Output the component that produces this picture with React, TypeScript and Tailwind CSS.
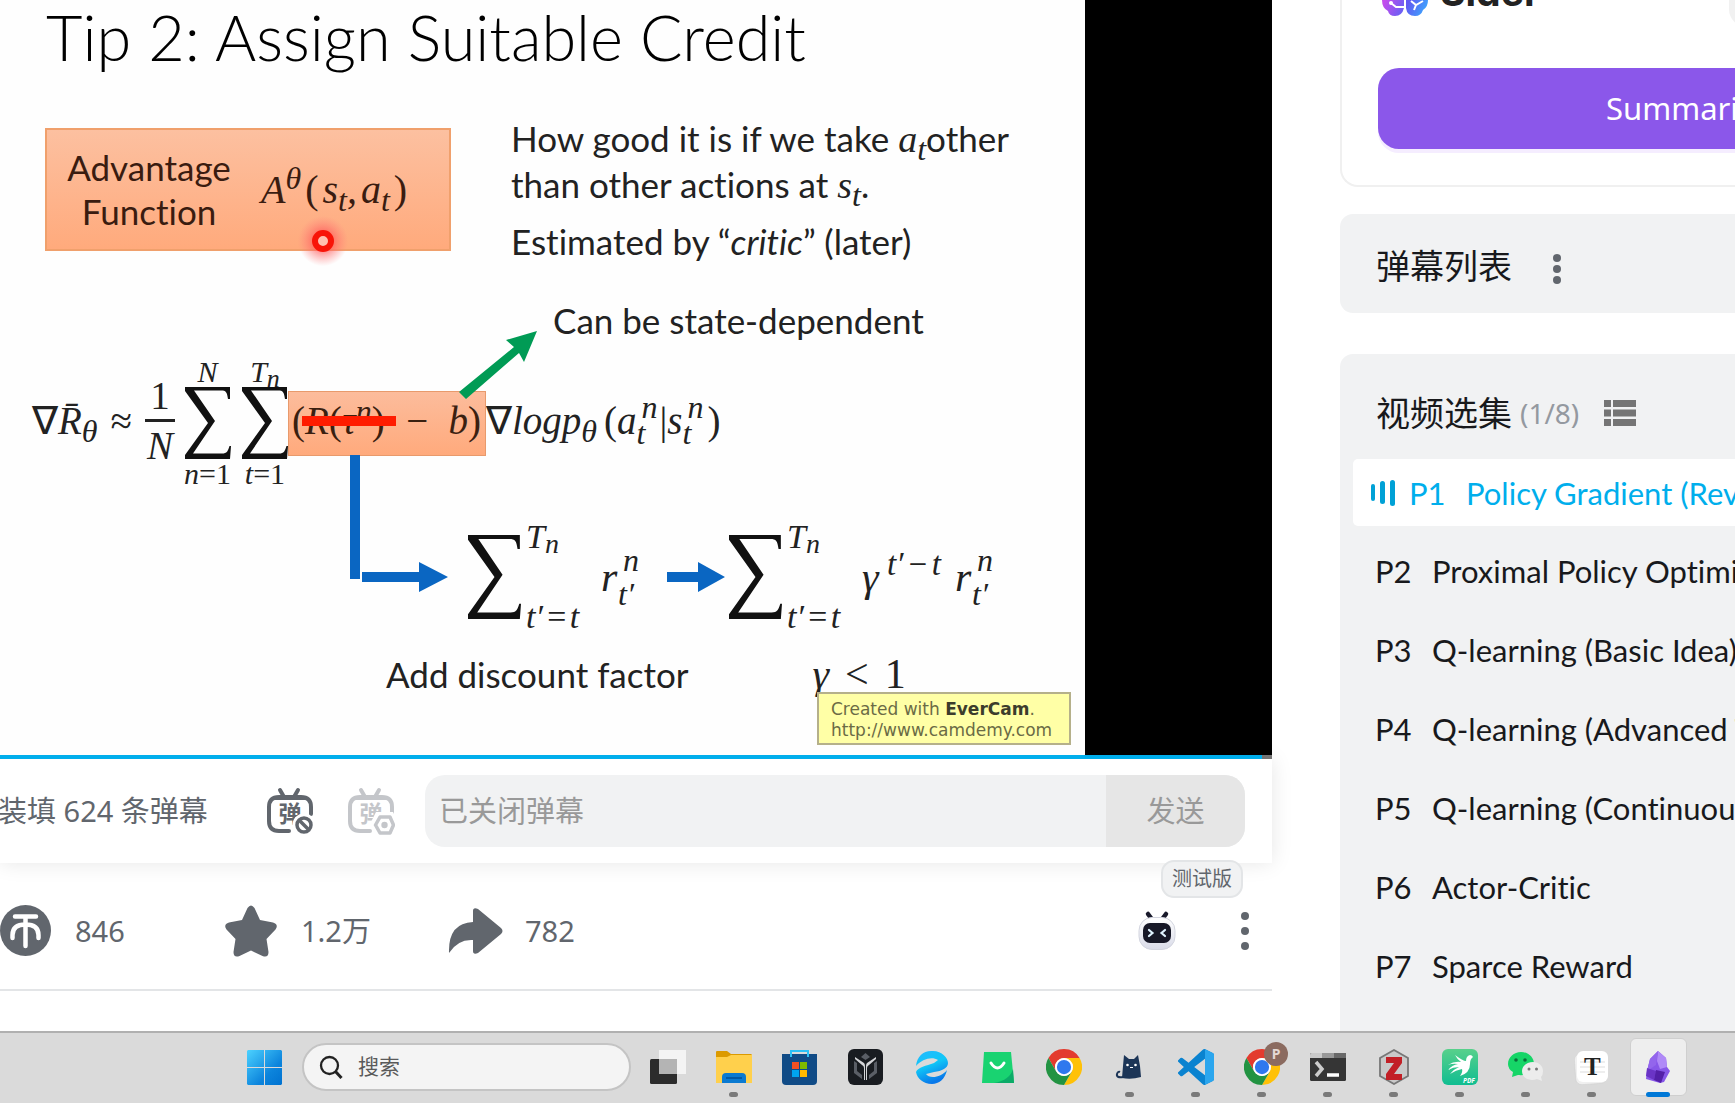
import type { ReactNode } from "react";

const episodes = [
  { id: "P1", title: "Policy Gradient (Review)" },
  { id: "P2", title: "Proximal Policy Optimization (PPO)" },
  { id: "P3", title: "Q-learning (Basic Idea)" },
  { id: "P4", title: "Q-learning (Advanced Tips)" },
  { id: "P5", title: "Q-learning (Continuous Action)" },
  { id: "P6", title: "Actor-Critic" },
  { id: "P7", title: "Sparce Reward" },
];

/* ---------- Lecture slide ---------- */

function Sigma({ className }: { className: string }) {
  return (
    <svg viewBox="0 0 46 72" preserveAspectRatio="none" className={`shrink-0 ${className}`} aria-hidden="true">
      <path d="M0 0H45V12H43C42 5 41 3.500 36 3.500H9L30 34L8 66.500H37C42 66.500 43 64 44.500 59H46L45 72H0V68L23 36L0 4Z" fill="#111" />
    </svg>
  );
}

/* Upright glyphs inside an italic formula. */
function Up({ children }: { children: ReactNode }) {
  return <span className="not-italic">{children}</span>;
}

function Sub({ children }: { children: ReactNode }) {
  return <sub className="bottom-[-8px] text-[32px] leading-none">{children}</sub>;
}

function Var({ children }: { children: ReactNode }) {
  return <i className="font-['Liberation_Serif',serif] text-[38px] leading-none">{children}</i>;
}

/* A superscript above a subscript. */
function Scripts({ top, bottom, className }: { top: string; bottom: string; className: string }) {
  return (
    <span className={`flex flex-col text-[32px] ${className}`}>
      <span className="pl-[5px]">{top}</span>
      <span>{bottom}</span>
    </span>
  );
}

/* Sum with its limits above and below. */
function Sum({ upper, lower, className }: { upper: ReactNode; lower: ReactNode; className: string }) {
  return (
    <span className={`flex flex-col items-center text-[30px] leading-[30px] ${className}`}>
      <span>{upper}</span>
      <Sigma className="h-[72px] w-[46px]" />
      <span>{lower}</span>
    </span>
  );
}

/* Sum with its limits at the right side. */
function SideSum() {
  return (
    <span className="flex w-[133px] items-center gap-[5px]">
      <Sigma className="h-[84px] w-[53px]" />
      <span className="flex h-[112px] flex-col justify-between text-[34px] leading-[32px]">
        <span>
          T<sub className="bottom-[-5px] text-[28px] leading-none">n</sub>
        </span>
        <span className="flex gap-[2px]">
          <span>t′</span>
          <span>=</span>
          <span>t</span>
        </span>
      </span>
    </span>
  );
}

function Slide() {
  return (
    <div className="relative flex h-full w-[1085px] shrink-0 flex-col bg-[#fefefe] font-[Lato,sans-serif] text-[35px] leading-[46px] whitespace-nowrap text-[#222] [font-variant-ligatures:none]">
      <h1 className="pt-[5px] pl-[46px] text-[63px] leading-none font-light text-black">Tip 2: Assign Suitable Credit</h1>

      <div className="mt-[47px] flex gap-[60px] pl-[45px]">
        <div className="relative mt-[13px] flex h-[123px] w-[406px] items-center border-2 border-[#f0a06c] bg-linear-to-b from-[#fcc0a0] to-[#ffaa7c] pl-[19px] text-[#3a1c10]">
          <p className="w-[166px] pb-[2px] text-center leading-[44px]">
            Advantage
            <br />
            Function
          </p>
          <p className="flex items-center gap-[4px] pl-[29px] font-['Liberation_Serif',serif] text-[40px] leading-none italic">
            <span>
              A<sup className="top-[-14px] text-[32px] leading-none">θ</sup>
            </span>
            <Up>(</Up>
            <span>
              s<Sub>t</Sub>,
            </span>
            <span>
              a<Sub>t</Sub>
            </span>
            <Up>)</Up>
          </p>
          <svg viewBox="0 0 60 60" className="absolute top-[81px] left-[246px] size-[60px]" aria-hidden="true">
            <defs>
              <radialGradient id="laser">
                <stop offset=".3" stopColor="#ff5a5a" stopOpacity=".75" />
                <stop offset=".9" stopColor="#ff8080" stopOpacity="0" />
              </radialGradient>
            </defs>
            <circle cx="30" cy="30" r="28" fill="url(#laser)" />
            <circle cx="30" cy="30" r="8" fill="#ffc0b0" stroke="#f81408" strokeWidth="6" />
          </svg>
        </div>
        <div>
          <p>
            How good it is if we take <Var>a<Sub>t</Sub></Var>other
            <br />
            than other actions at <Var>s<Sub>t</Sub></Var>.
          </p>
          <p className="mt-[11px]">
            Estimated by “<i>critic</i>” (later)
          </p>
          <p className="mt-[33px] pl-[42px]">Can be state-dependent</p>
        </div>
      </div>

      <div className="mt-[14px] flex items-center pl-[32px] font-['Liberation_Serif',serif] text-[39px] leading-none italic">
        <span className="w-[78px] pb-[6px]">
          <Up>∇</Up>R̄<Sub>θ</Sub>
        </span>
        <span className="w-[35px] pb-[6px]">≈</span>
        <span className="flex w-[30px] flex-col items-center pb-[6px]">
          <Up>1</Up>
          <span className="my-[4px] h-[3px] w-full bg-[#222]" />
          <span>N</span>
        </span>
        <Sum
          className="ml-[7px] w-[51px]"
          upper="N"
          lower={
            <>
              n<Up>=1</Up>
            </>
          }
        />
        <Sum
          className="ml-[9px] w-[46px]"
          upper={
            <>
              T<sub className="bottom-[-5px] text-[26px] leading-none">n</sub>
            </>
          }
          lower={
            <>
              t<Up>=1</Up>
            </>
          }
        />
        <span className="relative flex h-[65px] w-[198px] items-center justify-between border border-[#e89a6c] bg-linear-to-b from-[#fcbc9c] to-[#ffaa7c] pr-[4px] pb-[6px] pl-[3px] text-[#3a2010]">
          <s className="no-underline">
            <Up>(</Up>R<Up>(</Up>τ<sup className="top-[-12px] text-[32px] leading-none">n</sup>
            <Up>)</Up>
          </s>
          <span>−</span>
          <span>
            b<Up>)</Up>
          </span>
          <span className="absolute top-[24px] left-[13px] h-[10px] w-[94px] bg-[#ff1c00]" />
          <span className="absolute top-full left-[61px] h-[124px] w-[10px] bg-[#0a66c2]" />
          <svg viewBox="460 330 78 68" className="absolute bottom-[56px] left-[170px] h-[68px] w-[78px]" aria-hidden="true">
            <path d="M460 391L515 346L507 339L538 330L525 361L520 352L467 398Z" fill="#009b55" />
          </svg>
        </span>
        <span className="w-[118px] pb-[6px]">
          <Up>∇</Up>logp<Sub>θ</Sub>
        </span>
        <span className="pb-[6px]">
          <Up>(</Up>a
        </span>
        <Scripts top="n" bottom="t" className="pb-[6px] leading-[26px]" />
        <span className="pb-[6px] pl-[2px]">
          <Up>|</Up>s
        </span>
        <Scripts top="n" bottom="t" className="pb-[6px] leading-[26px]" />
        <span className="pb-[6px] pl-[4px]">
          <Up>)</Up>
        </span>
      </div>

      <div className="mt-[32px] flex items-center pl-[362px] font-['Liberation_Serif',serif] text-[42px] leading-none italic">
        <svg viewBox="362 564 86 30" className="mr-[20px] h-[30px] w-[86px]" aria-hidden="true">
          <path d="M362 574H419V564L448 579L419 594V584H362Z" fill="#0a66c2" />
        </svg>
        <SideSum />
        <span className="w-[17px]">r</span>
        <Scripts top="n" bottom="t′" className="w-[49px] leading-[34px]" />
        <svg viewBox="667 566 58 30" className="mr-[4px] h-[30px] w-[58px]" aria-hidden="true">
          <path d="M667 576H698V566L725 581L698 596V586H667Z" fill="#0a66c2" />
        </svg>
        <SideSum />
        <span className="w-[25px]">γ</span>
        <span className="flex w-[68px] gap-[3px] pb-[26px] text-[33px]">
          <span>t′</span>
          <span>−</span>
          <span>t</span>
        </span>
        <span className="w-[17px]">r</span>
        <Scripts top="n" bottom="t′" className="leading-[34px]" />
      </div>

      <div className="mt-[18px] flex gap-[124px] pl-[386px]">
        <p>Add discount factor</p>
        <p className="flex gap-[16px] font-['Liberation_Serif',serif] text-[42px]">
          <i>γ</i>
          <span>&lt;</span>
          <span>1</span>
        </p>
      </div>

      <p className="absolute right-[14px] bottom-[10px] h-[53px] w-[254px] border-2 border-[#b5b08a] bg-[#ffffa6] pt-[5px] pl-[12px] font-['DejaVu_Sans',sans-serif] text-[17px] leading-[21px] text-[#6b6b45]">
        Created with <b className="text-[#3c3c2c]">EverCam</b>.
        <br />
        http://www.camdemy.com
      </p>
    </div>
  );
}

/* ---------- Player controls ---------- */

function DanmuIcon({ kind }: { kind: "off" | "settings" }) {
  return (
    <svg viewBox="0 0 48 48" className="size-[48px]" aria-hidden="true">
      <g fill="none" stroke="currentColor" strokeWidth="4" strokeLinecap="round" strokeLinejoin="round">
        <path d="M14 3L18 10M32 3L28 10" />
        <path d="M45 27V20Q45 10 35 10H13Q3 10 3 20V34Q3 44 13 44H23" />
      </g>
      <path d="M6 10Q23 7 42 10V13H6Z" fill="currentColor" />
      <text x="12.500" y="35" fontSize="23" fontWeight="700" fill="currentColor" className="font-['Noto_Sans_CJK_SC',sans-serif]">弹</text>
      {kind === "off" ? (
        <g fill="none" stroke="#fff">
          <circle cx="38" cy="38" r="10.500" fill="#fff" strokeWidth="2" />
          <circle cx="38" cy="38" r="7" stroke="currentColor" strokeWidth="3.500" />
          <path d="M33 33L43 43" stroke="currentColor" strokeWidth="3.500" />
        </g>
      ) : (
        <g>
          <path d="M29 25H46L52 37L46 49H29L23 37Z" fill="#fff" />
          <path d="M33 30H43L46.500 38L43 46H33L28.500 38Z" fill="none" stroke="currentColor" strokeWidth="3.500" strokeLinejoin="round" />
          <circle cx="37.500" cy="38" r="3.200" fill="currentColor" />
        </g>
      )}
    </svg>
  );
}

function ControlBar() {
  return (
    <div className="flex h-[104px] items-center bg-white pr-[27px] shadow-[0_0_20px_rgba(0,0,0,0.10)]">
      <span className="-ml-[2px] w-[268px] text-[29px] leading-[40px] whitespace-nowrap text-[#61666d]">装填 624 条弹幕</span>
      <button aria-label="关闭弹幕" className="text-[#61666d]">
        <DanmuIcon kind="off" />
      </button>
      <button aria-label="弹幕设置" className="ml-[33px] text-[#c4c6ca]">
        <DanmuIcon kind="settings" />
      </button>
      <form className="ml-[30px] flex h-[72px] min-w-0 flex-1 overflow-hidden rounded-[20px] bg-[#f1f2f3]">
        <input aria-label="弹幕" placeholder="已关闭弹幕" className="min-w-0 flex-1 bg-transparent pl-[14px] text-[29px] outline-none placeholder:text-[#999]" />
        <button type="button" className="w-[139px] bg-[#e6e6e6] text-[29px] text-[#999]">发送</button>
      </form>
    </div>
  );
}

function Dots({ className }: { className: string }) {
  return (
    <span className={`flex flex-col items-center ${className}`}>
      <i className="size-[8px] rounded-full bg-current" />
      <i className="size-[8px] rounded-full bg-current" />
      <i className="size-[8px] rounded-full bg-current" />
    </span>
  );
}

function ActionBar() {
  return (
    <div className="relative flex h-[128px] items-center border-b-2 border-[#e3e5e7] pt-[9px] text-[29px] leading-[40px] text-[#61666d]">
      <button className="flex w-[225px] items-center gap-[24px]">
        <svg viewBox="0 0 51 51" className="size-[51px]" aria-hidden="true">
          <circle cx="25.500" cy="25.500" r="25.500" fill="currentColor" />
          <path d="M15 11.500H36M25.500 12V41M12.500 33V30Q12.500 19.500 25.500 19.500Q38.500 19.500 38.500 30V33" fill="none" stroke="#fff" strokeWidth="4.500" strokeLinecap="round" />
        </svg>
        846
      </button>
      <button className="flex w-[223px] items-center gap-[24px]">
        <svg viewBox="0 0 52 52" className="size-[52px]" aria-hidden="true">
          <path d="M22.500 3Q26 -2 29.500 3L35 15L48 17.500Q54 19.500 50.500 24.500L41.500 34L43.500 47Q43.500 53 37.500 51L26 45.500L14.500 51Q8.500 53 8.500 47L10.500 34L1.500 24.500Q-2 19.500 4 17.500L17 15Z" fill="currentColor" />
        </svg>
        1.2万
      </button>
      <button className="flex items-center gap-[21px]">
        <svg viewBox="0 0 56 46" className="h-[46px] w-[56px]" aria-hidden="true">
          <path d="M25 3Q25 -1 30 1L53 20Q56 23 53 26L30 45Q25 47 25 43V32Q10 31 1 45Q0 15 25 14Z" fill="currentColor" />
        </svg>
        782
      </button>
      <button aria-label="AI 助手" className="mr-[64px] ml-auto">
        <svg viewBox="0 0 40 42" className="h-[42px] w-[40px]" aria-hidden="true">
          <defs>
            <linearGradient id="bot" x2="0" y2="1">
              <stop stopColor="#fff" />
              <stop offset="1" stopColor="#d9dbe8" />
            </linearGradient>
          </defs>
          <path d="M11 4L14 8M29 4L26 8" stroke="#191a2b" strokeWidth="4.500" strokeLinecap="round" />
          <rect x="2" y="7.500" width="36" height="32" rx="13" fill="url(#bot)" stroke="#d3d5df" />
          <rect x="6" y="13" width="28" height="20" rx="7" fill="#171827" />
          <path d="M12 20L15.500 23L12 26M28 20L24.500 23L28 26" fill="none" stroke="#dff3ff" strokeWidth="2.200" strokeLinecap="round" />
        </svg>
      </button>
      <button aria-label="更多" className="mr-[23px]">
        <Dots className="gap-[7px]" />
      </button>
      <span className="absolute -top-[3px] right-[29px] rounded-[13px] border-2 border-[#e3e5e7] bg-[#f1f2f3] px-[9px] text-[20px] leading-[34px]">测试版</span>
    </div>
  );
}

/* ---------- Sidebar ---------- */

function Sidebar() {
  return (
    <aside className="flex min-w-0 flex-col overflow-hidden">
      <section className="h-[187px] shrink-0 rounded-bl-[18px] border-b-2 border-l-2 border-[#f0f0f0] pl-[36px]">
        <header className="flex h-[68px] items-start">
          <svg viewBox="0 0 46 46" className="-mt-[30px] ml-[4px] size-[46px]" aria-hidden="true">
            <defs>
              <linearGradient id="brainA" x2="1" y2="1">
                <stop offset=".4" stopColor="#c44bec" />
                <stop offset="1" stopColor="#5b63f5" />
              </linearGradient>
              <linearGradient id="brainB" x2="1" y2="1">
                <stop offset=".4" stopColor="#6258f2" />
                <stop offset="1" stopColor="#35b5ff" />
              </linearGradient>
            </defs>
            <path d="M22 6V38Q20 46 13 46Q7 46 6 41Q0 38 0 30V16Q3 3 14 1Q21 1 22 6Z" fill="url(#brainA)" />
            <path d="M24 6V38Q25 46 33 46Q39 46 41 40Q46 37 46 30V16Q43 3 32 1Q25 1 24 6Z" fill="url(#brainB)" />
            <path d="M9 33L14 37H22M29 31L34 35L41 31M34 35L32 40" fill="none" stroke="#fff" strokeWidth="2" />
            <circle cx="9" cy="33" r="2" fill="#fff" />
          </svg>
          <b className="-mt-[32px] ml-[12px] font-[Inter,sans-serif] text-[39px] leading-[48px] text-[#222]">Sider</b>
          <i className="-mt-[24px] mr-[-40px] ml-auto h-[51px] w-[46px] rounded-[18px] bg-[#f1f1f1]" />
        </header>
        <button className="flex h-[81px] w-full items-center overflow-hidden rounded-l-[21px] bg-[#8b57ea] pl-[228px] text-[31px] text-white shadow-[0_4px_0_#f5edff]">
          Summarize
        </button>
      </section>

      <section className="mt-[27px] flex h-[99px] shrink-0 items-center rounded-l-[13px] bg-[#f1f2f3] pl-[36px]">
        <h2 className="pt-[4px] text-[34px] leading-[48px] text-[#18191c]">弹幕列表</h2>
        <button aria-label="更多" className="mt-[10px] ml-[41px] text-[#61666d]">
          <Dots className="gap-[3px]" />
        </button>
      </section>

      <section className="mt-[41px] flex-1 rounded-tl-[13px] bg-[#f1f2f3] pl-[13px]">
        <header className="flex h-[105px] items-center pt-[12px] pl-[23px]">
          <h2 className="text-[34px] leading-[48px] whitespace-nowrap text-[#18191c]">视频选集</h2>
          <span className="ml-[8px] text-[28px] text-[#9499a0]">(1/8)</span>
          <button aria-label="列表" className="ml-[25px]">
            <svg viewBox="0 0 32 26" className="h-[26px] w-[32px]" fill="#757575" aria-hidden="true">
              <path d="M0 0H7V7H0ZM9 0H32V7H9ZM0 9.500H7V16.500H0ZM9 9.500H32V16.500H9ZM0 19H7V26H0ZM9 19H32V26H9Z" />
            </svg>
          </button>
        </header>
        <ul className="flex flex-col gap-[12px] font-[Lato,'Noto_Sans_CJK_SC',sans-serif] text-[31px] leading-[38px] whitespace-nowrap text-[#18191c] [font-variant-ligatures:none]">
          {episodes.map((episode, index) => (
            <li key={episode.id}>
              {index === 0 ? (
                <a href="#p1" className="flex h-[67px] items-center rounded-l-[5px] bg-white pl-[18px] text-[#00a1d6]">
                  <span className="mr-[14px] flex h-[26px] shrink-0 items-center gap-[5px]">
                    <i className="h-[17px] w-[4px] rounded-full bg-current" />
                    <i className="h-[23px] w-[5px] rounded-full bg-current" />
                    <i className="h-[26px] w-[5px] rounded-full bg-current" />
                  </span>
                  <span className="w-[57px] shrink-0 text-[#00aeec]">{episode.id}</span>
                  <span className="text-[#00aeec]">{episode.title}</span>
                </a>
              ) : (
                <a href={`#${episode.id.toLowerCase()}`} className="flex h-[67px] items-center pb-[2px] pl-[22px]">
                  <span className="w-[57px] shrink-0">{episode.id}</span>
                  <span>{episode.title}</span>
                </a>
              )}
            </li>
          ))}
        </ul>
      </section>
    </aside>
  );
}

/* ---------- Taskbar ---------- */

function Icon({ children }: { children: ReactNode }) {
  return (
    <svg viewBox="0 0 36 36" className="size-[36px]" aria-hidden="true">
      {children}
    </svg>
  );
}

const chrome = (
  <g transform="scale(.75)">
    <path d="M3.215 12A24 24 0 0 1 44.785 12H24A12 12 0 0 0 13.608 30Z" fill="#e33b2e" />
    <path d="M44.785 12A24 24 0 0 1 24 48L34.392 30A12 12 0 0 0 24 12Z" fill="#ffc107" />
    <path d="M24 48A24 24 0 0 1 3.215 12L13.608 30A12 12 0 0 0 34.392 30Z" fill="#229342" />
    <circle cx="24" cy="24" r="12" fill="#fff" />
    <circle cx="24" cy="24" r="9.500" fill="#2f78ee" />
  </g>
);

const apps: { name: string; running: boolean; icon: ReactNode }[] = [
  {
    name: "任务视图",
    running: false,
    icon: (
      <Icon>
        <rect y="10" width="27" height="25" rx="1.500" fill="#2c2c2c" />
        <path d="M9 1H36V25H9Z" fill="#fafafa" fillOpacity=".8" />
        <path d="M9 10H27V25H9Z" fill="#b4b4b4" />
      </Icon>
    ),
  },
  {
    name: "文件资源管理器",
    running: true,
    icon: (
      <Icon>
        <path d="M0 3Q0 2 1 2H11L15 5H35Q36 5 36 7V20H0Z" fill="#dc9a00" />
        <path d="M0 8H11L15 6H36V34H0Z" fill="#ffd04c" />
        <path d="M6 34V28Q6 24 10 24H26Q30 24 30 28V34Z" fill="#0b7ad1" />
        <path d="M10 29H26" stroke="#004f96" strokeWidth="1.500" />
      </Icon>
    ),
  },
  {
    name: "Microsoft Store",
    running: false,
    icon: (
      <Icon>
        <path d="M0 5H35V32Q35 36 31 36H4Q0 36 0 32Z" fill="#104b86" />
        <path d="M9 8V2H26V8" fill="none" stroke="#2cc0f5" strokeWidth="2" />
        <path d="M10 13H17V20H10Z" fill="#f25022" />
        <path d="M18 13H25V20H18Z" fill="#7fba00" />
        <path d="M10 21H17V28H10Z" fill="#00a4ef" />
        <path d="M18 21H25V28H18Z" fill="#ffb900" />
      </Icon>
    ),
  },
  {
    name: "Legion",
    running: false,
    icon: (
      <Icon>
        <rect width="35" height="36" rx="6" fill="#191c21" />
        <path d="M7 8L16 14Q17 15 17 17V31H16V19Q16 17 14 16L7 10ZM28 8L19 14Q18 15 18 17V31H19V19Q19 17 21 16L28 10Z" fill="#d4d5d8" />
        <path d="M17.500 4L13 8L17.500 11L22 8ZM6 12L9 14V22L14 26V30L6 24ZM29 12L26 14V22L21 26V30L29 24Z" fill="#5a5e66" />
      </Icon>
    ),
  },
  {
    name: "浏览器",
    running: false,
    icon: (
      <Icon>
        <defs>
          <linearGradient id="edge" x2=".4" y2="1">
            <stop stopColor="#25b9ff" />
            <stop offset=".5" stopColor="#10c7f7" />
            <stop offset="1" stopColor="#0878ea" />
          </linearGradient>
        </defs>
        <path d="M2 17C3 7 10 1 19 2C28 2 34 9 34 14C34 19 28 22 20 23L12 25C15 30 27 29 33 21C31 30 25 35 18 35C9 35 3 29 2 23C4 18 12 17 20 14L24 11C18 7 8 10 2 17Z" fill="url(#edge)" />
      </Icon>
    ),
  },
  {
    name: "应用商店",
    running: false,
    icon: (
      <Icon>
        <path d="M4 3H31L34 34H2Z" fill="#19d371" />
        <path d="M14 34Q30 31 33 20L34 34Z" fill="#0bab68" />
        <path d="M11 14Q17.500 24 24 14" fill="none" stroke="#fff" strokeWidth="3" strokeLinecap="round" />
      </Icon>
    ),
  },
  { name: "Google Chrome", running: false, icon: <Icon>{chrome}</Icon> },
  {
    name: "Clash",
    running: true,
    icon: (
      <Icon>
        <path d="M10 29L11 17L12 6L17 10H22L26 6L28 17L29 28Q19 31 10 29Z" fill="#1c3557" />
        <path d="M11 28Q4 29 5 25Q6 22 8 23" fill="none" stroke="#1c3557" strokeWidth="2" />
        <circle cx="15.500" cy="16" r="1.300" fill="#fff" />
        <circle cx="23.500" cy="16" r="1.300" fill="#fff" />
        <path d="M18 18.500H21" stroke="#fff" />
      </Icon>
    ),
  },
  {
    name: "Visual Studio Code",
    running: true,
    icon: (
      <Icon>
        <g transform="scale(1.500)">
          <path d="M23.150 2.587L18.210.210a1.494 1.494 0 0 0-1.705.290l-9.460 8.630-4.120-3.128a.999.999 0 0 0-1.276.057L.327 7.261A1 1 0 0 0 .326 8.740L3.899 12 .326 15.260a1 1 0 0 0 .001 1.479L1.650 17.940a.999.999 0 0 0 1.276.057l4.120-3.128 9.460 8.630a1.492 1.492 0 0 0 1.704.290l4.942-2.377A1.500 1.500 0 0 0 24 20.060V3.939a1.500 1.500 0 0 0-.850-1.352zm-5.146 14.861L10.826 12l7.178-5.448v10.896z" fill="#0a83d0" />
          <path d="M18 .1L23.150 2.587Q24 3 24 3.939V20.060Q24 21 23.150 21.400L18 23.900Z" fill="#2ba6ee" />
        </g>
      </Icon>
    ),
  },
  {
    name: "Google Chrome P",
    running: true,
    icon: (
      <span className="relative block">
        <Icon>{chrome}</Icon>
        <span className="absolute -top-[7px] left-[20px] flex size-[24px] items-center justify-center rounded-full bg-[#8b6b60] text-[14px] leading-none font-bold text-[#e4d9d4]">P</span>
      </span>
    ),
  },
  {
    name: "终端",
    running: true,
    icon: (
      <Icon>
        <rect y="4" width="36" height="28" rx="1.500" fill="#353535" />
        <path d="M0 9V5.500Q0 4 1.500 4H12V9Z" fill="#c9c9c9" />
        <path d="M12 4H24V9H12Z" fill="#989898" />
        <path d="M24 4H36V9H24Z" fill="#696969" />
        <path d="M6 13L12 20L6 27" fill="none" stroke="#ccc" strokeWidth="3.500" />
        <path d="M17 26H29" stroke="#fff" strokeWidth="3.500" />
      </Icon>
    ),
  },
  {
    name: "Zotero",
    running: true,
    icon: (
      <Icon>
        <path d="M18 1L32 9V27L18 35L4 27V9Z" fill="#c9c9c9" stroke="#777" strokeWidth="1.800" />
        <path d="M10 8H26V14L18 25H26V31H10V25L18 14H10Z" fill="#c21f26" />
      </Icon>
    ),
  },
  {
    name: "PDF",
    running: true,
    icon: (
      <Icon>
        <defs>
          <linearGradient id="pdf" x2="0" y2="1">
            <stop stopColor="#58d08b" />
            <stop offset="1" stopColor="#10bd91" />
          </linearGradient>
        </defs>
        <rect width="36" height="36" rx="6" fill="url(#pdf)" />
        <path d="M13 6Q21 12 24 12Q24 7 28 6Q30 6 31 8Q28 10 28 15Q28 24 18 27Q21 23 20 20Q14 21 8 25Q12 20 17 18Q11 18 6 21Q10 16 16 15Q11 14 6 16Q12 12 19 13Q15 10 13 6Z" fill="#fff" />
        <text x="21" y="33.500" fontSize="6.500" fontWeight="700" fontStyle="italic" fill="#fff">PDF</text>
      </Icon>
    ),
  },
  {
    name: "微信",
    running: true,
    icon: (
      <Icon>
        <path d="M13 3C20 3 26 8 26 15C26 23 19 27 10 26L4 28L5 23Q0 20 0 15C0 8 6 3 13 3Z" fill="#16d567" />
        <circle cx="8" cy="11" r="1.800" fill="#0a6e3a" />
        <circle cx="17" cy="11" r="1.800" fill="#0a6e3a" />
        <path d="M25 13C31 13 35 17 35 22Q35 26 33 28L34 32L29 30C20 33 14 28 14 22C14 17 19 13 25 13Z" fill="#ececec" />
        <circle cx="21" cy="20" r="1.500" fill="#777" />
        <circle cx="28.500" cy="20" r="1.500" fill="#777" />
      </Icon>
    ),
  },
  {
    name: "Typora",
    running: true,
    icon: (
      <Icon>
        <rect x="1" y="4" width="31" height="31" rx="6" fill="#f0f0f0" stroke="#ccc" strokeWidth=".5" transform="rotate(-4 17 19)" />
        <rect x="3" y="2" width="31" height="31" rx="6" fill="#fff" />
        <path d="M6 13H31M6 18H31M6 23H31" stroke="#ddd" />
        <text x="10" y="26" fontSize="25" fontWeight="700" fill="#222" className="font-['Liberation_Serif',serif]">T</text>
      </Icon>
    ),
  },
  {
    name: "Obsidian",
    running: false,
    icon: (
      <Icon>
        <path d="M18 2L26 9L27 18L30 22L24 33L20 34L6 30L7 22L10 10Z" fill="#8757e8" />
        <path d="M18 2L26 9L27 18L20 20L17 12Z" fill="#b08af7" />
        <path d="M7 22L10 10L18 2L16 16Z" fill="#9365ec" />
        <path d="M6 27L7 19L16 22L14 31Z" fill="#6a34c6" />
        <path d="M14 31L16 21L25 23L21 34Z" fill="#5320a8" />
      </Icon>
    ),
  },
];

function Taskbar() {
  return (
    <nav aria-label="任务栏" className="flex h-[72px] shrink-0 items-center overflow-hidden border-t-2 border-[#b0b0b0] bg-[#dadada] pb-[2px] pl-[231px]">
      <button aria-label="开始" className="flex w-[66px] shrink-0 justify-center">
        <svg viewBox="0 0 35 35" className="size-[35px]" aria-hidden="true">
          <defs>
            <linearGradient id="win" x2="1" y2="1" gradientUnits="objectBoundingBox">
              <stop stopColor="#4cd2ff" />
              <stop offset=".65" stopColor="#0c84dc" />
              <stop offset="1" stopColor="#0072d0" />
            </linearGradient>
          </defs>
          <path d="M1 0H17V17H0V1ZM18 0H34L35 1V17H18ZM0 18H17V35H1L0 34ZM18 18H35V34L34 35H18Z" fill="url(#win)" />
        </svg>
      </button>
      <label className="mr-[4px] ml-[5px] flex h-[48px] w-[329px] shrink-0 items-center rounded-full border-2 border-[#c4c4c4] bg-[#f4f4f4] pl-[15px]">
        <svg viewBox="0 0 24 24" className="size-[24px]" fill="none" stroke="#222" strokeWidth="2.300" aria-hidden="true">
          <circle cx="10.500" cy="10.500" r="8.500" />
          <path d="M16.500 16.500L22.500 23" strokeWidth="3" />
        </svg>
        <input aria-label="搜索" placeholder="搜索" className="ml-[15px] min-w-0 flex-1 bg-transparent text-[21px] outline-none placeholder:text-[#5a5a5a]" />
      </label>
      {apps.map((app) => {
        const active = app.name === "Obsidian";
        return (
          <button key={app.name} aria-label={app.name} className="relative flex h-[68px] w-[66px] shrink-0 items-center justify-center">
            <span className={active ? "flex h-[58px] w-[57px] items-center justify-center rounded-[6px] border border-[#cfcfcf] bg-[#eee]" : ""}>{app.icon}</span>
            {app.running && <i className="absolute bottom-[4px] left-[28px] h-[5px] w-[9px] rounded-full bg-[#7a7a7a]" />}
            {active && <i className="absolute bottom-[4px] left-[21px] h-[5px] w-[24px] rounded-full bg-[#0078d7]" />}
          </button>
        );
      })}
    </nav>
  );
}

export default function App() {
  return (
    <div className="flex h-screen flex-col overflow-hidden bg-white font-['Noto_Sans','Noto_Sans_CJK_SC',sans-serif]">
      <div className="grid min-h-0 flex-1 grid-cols-[minmax(0,1fr)_395px] gap-[68px]">
        <main className="min-w-0">
          <div className="h-[755px] overflow-hidden bg-black">
            <Slide />
          </div>
          <div className="flex h-[4px] bg-[#777]">
            <div className="mr-[10px] flex-1 bg-[#00aeec]" />
          </div>
          <ControlBar />
          <ActionBar />
        </main>
        <Sidebar />
      </div>
      <Taskbar />
    </div>
  );
}
